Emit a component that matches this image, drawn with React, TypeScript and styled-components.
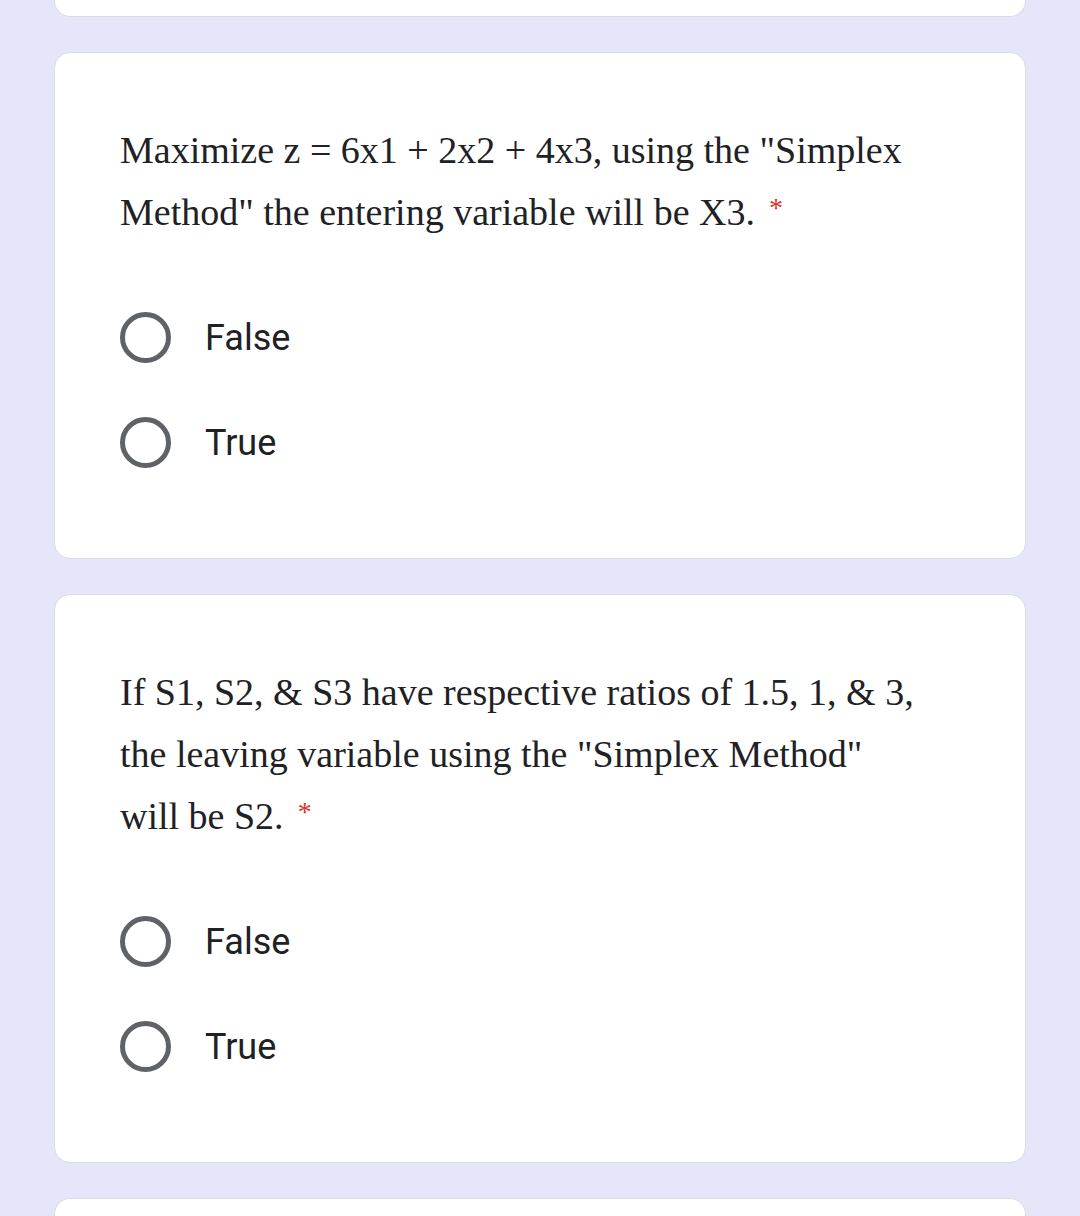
import styled, { createGlobalStyle } from "styled-components";

const GlobalStyle = createGlobalStyle`
  html, body {
    margin: 0;
    padding: 0;
    background: #e6e6fa;
  }
  body {
    font-family: "Liberation Serif", serif;
  }
`;

type Question = {
  lines: string[];
  options: string[];
};

const questions: Question[] = [
  {
    lines: [
      'Maximize z = 6x1 + 2x2 + 4x3, using the "Simplex',
      'Method" the entering variable will be X3.',
    ],
    options: ["False", "True"],
  },
  {
    lines: [
      "If S1, S2, & S3 have respective ratios of 1.5, 1, & 3,",
      'the leaving variable using the "Simplex Method"',
      "will be S2.",
    ],
    options: ["False", "True"],
  },
];

const App = () => {
  return (
    <>
      <GlobalStyle />
      <Page>
        <StubCard $edge="bottom" />
        {questions.map((q, i) => (
          <Card key={i}>
            <QuestionText>
              {q.lines.map((line, j) => (
                <span key={j}>
                  {line}
                  {j === q.lines.length - 1 ? (
                    <Required>*</Required>
                  ) : (
                    <br />
                  )}
                </span>
              ))}
            </QuestionText>
            <Options>
              {q.options.map((opt) => (
                <OptionRow key={opt}>
                  <Radio />
                  <OptionLabel>{opt}</OptionLabel>
                </OptionRow>
              ))}
            </Options>
          </Card>
        ))}
        <StubCard $edge="top" />
      </Page>
    </>
  );
};
export default App;

const Page = styled.div`
  width: 972px;
  margin: 0 auto;
  display: flex;
  flex-direction: column;
  gap: 35px;
  height: 1216px;
  overflow: hidden;
`;

const Card = styled.div`
  background: #ffffff;
  border: 1px solid #dadce0;
  border-radius: 16px;
  padding: 66px 65px 63px 65px;
  display: flex;
  flex-direction: column;
  gap: 42px;
  flex-shrink: 0;
`;

const StubCard = styled.div<{ $edge: "top" | "bottom" }>`
  background: #ffffff;
  border: 1px solid #dadce0;
  flex-shrink: 0;
  height: ${(p) => (p.$edge === "bottom" ? "16px" : "200px")};
  ${(p) =>
    p.$edge === "bottom"
      ? "border-top: none; border-radius: 0 0 16px 16px;"
      : "border-bottom: none; border-radius: 16px 16px 0 0;"}
`;

const QuestionText = styled.div`
  font-family: "Liberation Serif", "Times New Roman", serif;
  font-size: 38px;
  line-height: 62px;
  color: #202124;
  white-space: nowrap;
`;

const Required = styled.span`
  color: #d93025;
  font-size: 28px;
  line-height: 0;
  margin-left: 14px;
  vertical-align: 8px;
`;

const Options = styled.div`
  display: flex;
  flex-direction: column;
`;

const OptionRow = styled.div`
  height: 105px;
  display: flex;
  align-items: center;
  gap: 34px;
`;

const Radio = styled.div`
  width: 51px;
  height: 51px;
  box-sizing: border-box;
  border: 5px solid #5f6368;
  border-radius: 50%;
  flex-shrink: 0;
`;

const OptionLabel = styled.span`
  font-family: Roboto, "Liberation Sans", sans-serif;
  font-size: 36px;
  color: #202124;
`;
